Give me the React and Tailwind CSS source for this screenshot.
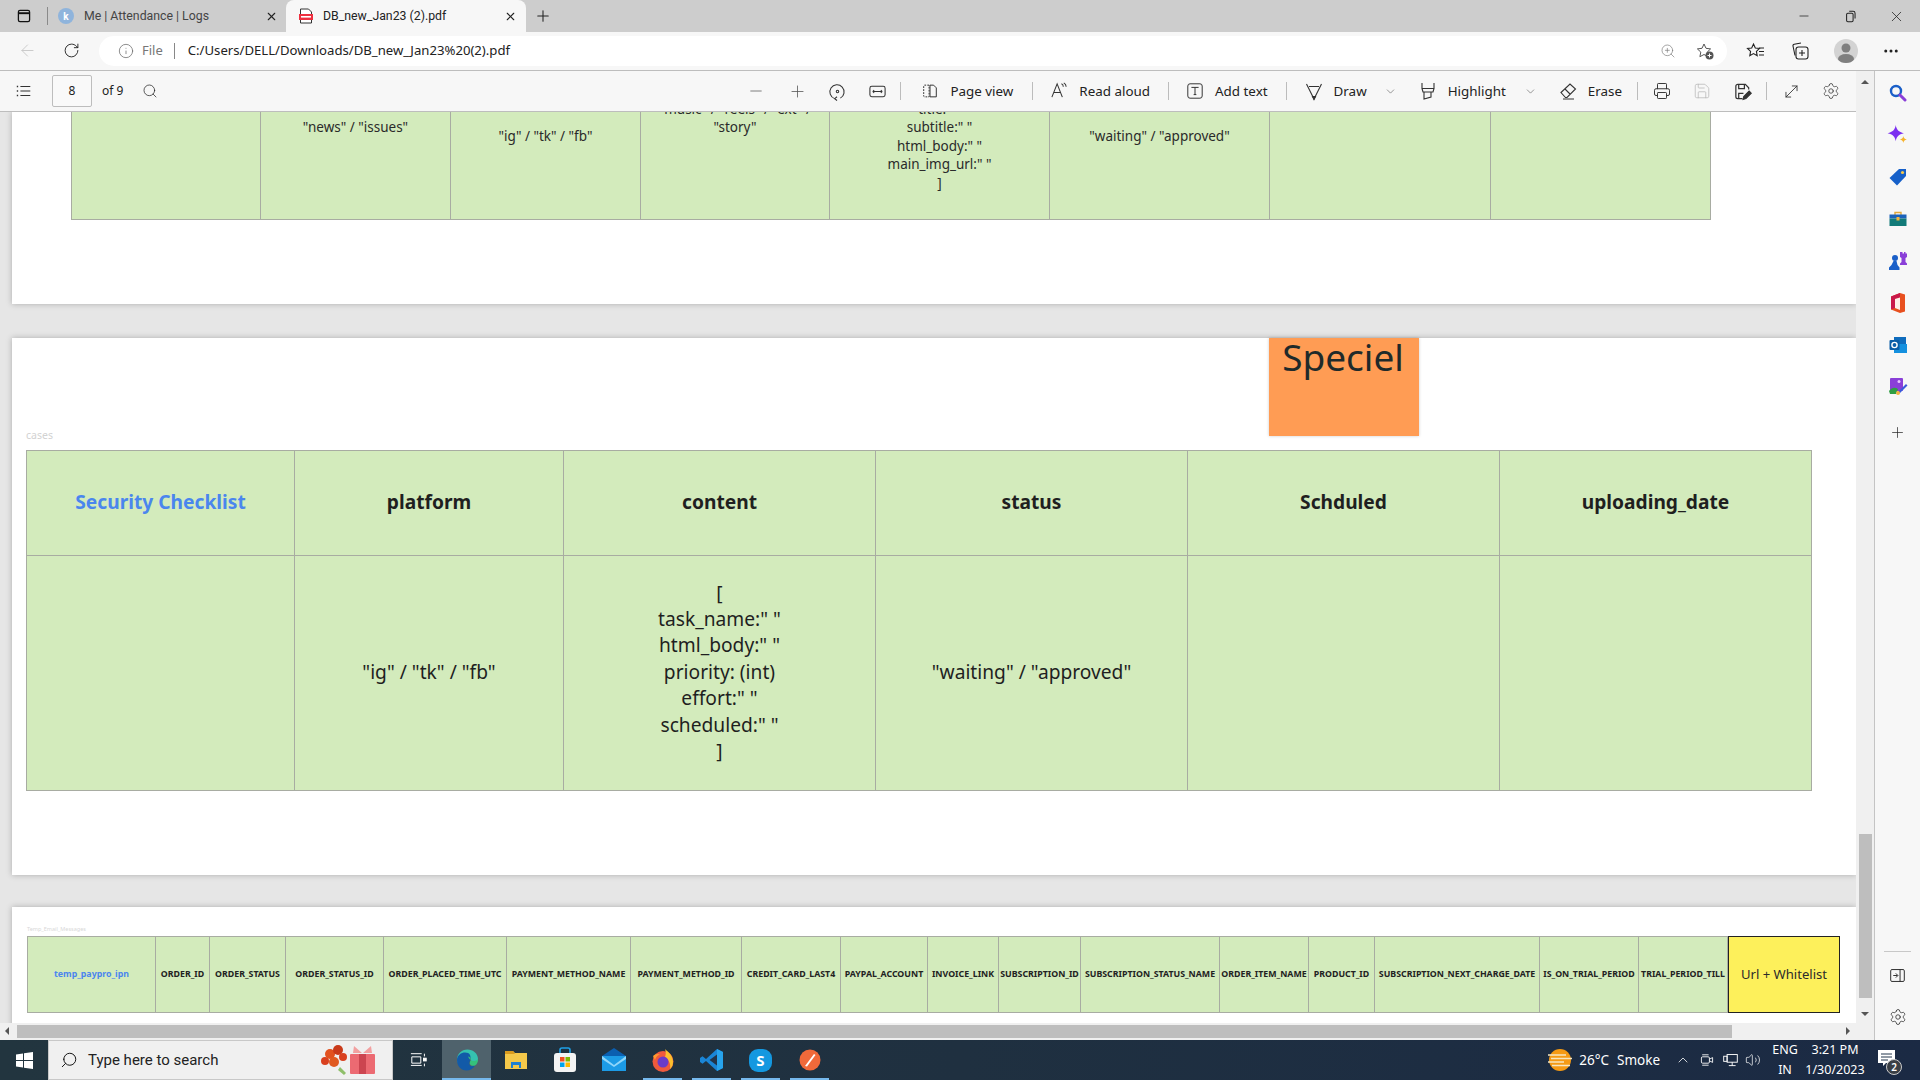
import {
  ArrowLeft, RotateCw, Info, ZoomIn, Minus, Plus, Search, ChevronDown, ChevronUp, X, Settings, Printer, Save,
  MoveDiagonal, Volume2, Ellipsis,
} from 'lucide-react'

function Svg({ size = 20, children, className = '' }) {
  return (
    <svg width={size} height={size} viewBox="0 0 20 20" fill="none" stroke="currentColor" strokeWidth="1.1" className={className}>
      {children}
    </svg>
  )
}

function TabStrip() {
  return (
    <div className="flex h-8 shrink-0 items-end bg-[#cdcdcd] text-[12.3px] text-[#333] [font-family:Roboto,sans-serif]">
      <div className="flex h-8 w-[47px] items-center justify-center">
        <Svg size={16} className="text-[#111]">
          <rect x="3" y="3" width="14" height="14" rx="2" strokeWidth="1.6" />
          <path d="M3 6.5h14" strokeWidth="2.4" />
        </Svg>
      </div>
      <div className="mb-[7px] h-[18px] w-px bg-[#8a8a8a]" />
      <div className="flex h-8 w-[238px] items-center pl-[10px]">
        <span className="flex h-4 w-4 items-center justify-center rounded-full bg-[#8fb4dc] text-[10px] font-bold text-white">k</span>
        <span className="ml-[10px] flex-1 text-[#444]">Me | Attendance | Logs</span>
        <X size={13} className="mr-[8px] text-[#222]" />
      </div>
      <div className="flex h-8 w-[240px] items-center rounded-t-lg bg-[#f7f7f7] pl-[11px]">
        <svg width="16" height="16" viewBox="0 0 16 16" className="ml-px">
          <path d="M2.5 1h8l3 3v11h-11z" fill="#fff" stroke="#333" strokeWidth="1" />
          <rect x="1" y="6" width="14" height="6" fill="#ee2f3f" />
          <rect x="3" y="8" width="10" height="1.6" fill="#fff" />
        </svg>
        <span className="ml-[9px] flex-1 text-[#222]">DB_new_Jan23 (2).pdf</span>
        <X size={13} className="mr-[9px] text-[#222]" />
      </div>
      <div className="flex h-8 w-[34px] items-center justify-center">
        <Plus size={18} strokeWidth={1.4} className="text-[#222]" />
      </div>
      <div className="flex-1" />
      <div className="flex h-8 items-center text-[#222]">
        <div className="flex w-[46px] justify-center"><Minus size={14} strokeWidth={1.3} /></div>
        <div className="flex w-[46px] justify-center">
          <Svg size={13} className="text-[#222]">
            <rect x="4" y="5" width="10" height="13" rx="2" strokeWidth="1.6" />
            <path d="M8 2h6a3 3 0 0 1 3 3v8" strokeWidth="1.6" />
          </Svg>
        </div>
        <div className="mr-px flex w-[46px] justify-center"><X size={17} strokeWidth={1.1} /></div>
      </div>
    </div>
  )
}

function AddressBar() {
  return (
    <div className="flex h-[39px] shrink-0 items-center border-b border-[#bdbdbd] bg-[#f7f7f7] pb-px">
      <ArrowLeft size={19} strokeWidth={1.1} className="ml-[18px] text-[#c4c4c4]" />
      <RotateCw size={17} strokeWidth={1.3} className="ml-[26px] text-[#222]" />
      <div className="ml-[19px] flex h-[30px] w-[1628px] items-center rounded-full bg-white text-[13.15px]">
        <Info size={16} strokeWidth={1.1} className="ml-[19px] text-[#666]" />
        <span className="ml-[8px] text-[13px] text-[#777]">File</span>
        <div className="ml-[11px] h-[16px] w-px bg-[#888]" />
        <span className="ml-[13px] text-[#222]">C:/Users/DELL/Downloads/DB_new_Jan23%20(2).pdf</span>
        <div className="flex-1" />
        <ZoomIn size={16} strokeWidth={1} className="mr-[20px] text-[#777]" />
        <svg width="18" height="18" viewBox="0 0 18 18" className="mr-[13px]">
          <path d="M8 2l2 4.3 4.6.6-3.4 3.2.9 4.6L8 12.5 3.9 14.7l.9-4.6L1.4 6.9 6 6.3z" fill="none" stroke="#555" strokeWidth="1" />
          <circle cx="13.5" cy="13.5" r="4" fill="#555" />
          <path d="M13.5 11.5v4M11.5 13.5h4" stroke="#fff" strokeWidth="1" />
        </svg>
      </div>
      <svg width="20" height="20" viewBox="0 0 20 20" className="ml-[19px]" fill="none" stroke="#222" strokeWidth="1.1">
        <path d="M7.5 3l1.8 4 4.2.5-3.1 2.9.8 4.3-3.7-2.1-3.7 2.1.8-4.3L1.5 7.5 5.7 7z" />
        <path d="M13 7h5M13 10.5h5M13 14h5" />
      </svg>
      <svg width="20" height="20" viewBox="0 0 20 20" className="ml-[24px]" fill="none" stroke="#222" strokeWidth="1.1">
        <path d="M5 14.5 3 5a1.5 1.5 0 0 1 1.2-1.8L11 2" />
        <rect x="6" y="6" width="12" height="12" rx="2.5" />
        <path d="M12 9v6M9 12h6" />
      </svg>
      <div className="ml-[24px] flex h-6 w-6 items-center justify-center overflow-hidden rounded-full bg-[#d3d3d3]">
        <svg width="24" height="24" viewBox="0 0 24 24" fill="#7f7f7f">
          <circle cx="12" cy="9" r="4.5" />
          <ellipse cx="12" cy="20" rx="8" ry="5" />
        </svg>
      </div>
      <Ellipsis size={18} className="ml-[24px] text-[#222]" />
    </div>
  )
}

function ToolSep({ className = '' }) {
  return <div className={`h-[18px] w-px shrink-0 bg-[#bcbcbc] ${className}`} />
}

function ToolIcon({ children, className = '' }) {
  return <div className={`flex h-10 w-10 shrink-0 items-center justify-center text-[#333] ${className}`}>{children}</div>
}

function ToolLabel({ icon, label, className = '' }) {
  return (
    <div className={`flex shrink-0 items-center whitespace-nowrap text-[13.4px] text-[#222] ${className}`}>
      <div className="flex w-8 justify-center text-[#333]">{icon}</div>
      <span className="ml-1">{label}</span>
    </div>
  )
}

function PdfToolbar() {
  return (
    <div className="flex h-[41px] shrink-0 items-center border-b border-[#bdbdbd] bg-[#f7f7f7] text-[#222]">
      <ToolIcon className="ml-1">
        <Svg size={18}>
          <path d="M6 5h11M6 10h11M6 15h11" strokeWidth="1.2" />
          <path d="M2 5h1.5M2 10h1.5M2 15h1.5" strokeWidth="1.6" />
        </Svg>
      </ToolIcon>
      <div className="ml-2 flex h-8 w-10 shrink-0 items-center justify-center rounded-[2px] border border-[#bdbdbd] bg-[#f9f9f9] text-[12px]">8</div>
      <span className="ml-[10px] whitespace-nowrap text-[12px]">of 9</span>
      <Search size={16} strokeWidth={1.1} className="ml-[19px] shrink-0" />

      <ToolIcon className="ml-[578px]"><Minus size={18} strokeWidth={1} className="text-[#555]" /></ToolIcon>
      <ToolIcon className="ml-px"><Plus size={19} strokeWidth={1} className="text-[#555]" /></ToolIcon>
      <ToolIcon>
        <Svg size={19}>
          <path d="M7 17.5A7.5 7.5 0 1 1 13 17" />
          <path d="M9.5 15.5 7 17.5l2.5 2" />
          <circle cx="10" cy="10" r="1.3" />
        </Svg>
      </ToolIcon>
      <ToolIcon>
        <Svg size={19}>
          <rect x="2" y="4.5" width="16" height="11" rx="2" />
          <path d="M5 10h10M5 10l1.5-1.5M5 10l1.5 1.5M15 10l-1.5-1.5M15 10l-1.5 1.5" />
        </Svg>
      </ToolIcon>
      <ToolSep className="ml-[3px]" />
      <ToolLabel
        className="ml-[13px]"
        label="Page view"
        icon={
          <Svg size={18}>
            <path d="M9 3.5H4a1 1 0 0 0-1 1v11a1 1 0 0 0 1 1h5z" strokeDasharray="2 1.3" />
            <path d="M10 3.5h4l3 3v10h-7z" />
          </Svg>
        }
      />
      <ToolSep className="ml-[19px]" />
      <ToolLabel
        className="ml-[10px]"
        label="Read aloud"
        icon={
          <Svg size={19}>
            <path d="M2 17 7.5 3 13 17M4 12h7" />
            <path d="M12 3c1.5.5 2 1.5 2 3M14.5 2c1.8 1 2.5 2 2.5 4" />
          </Svg>
        }
      />
      <ToolSep className="ml-[18px]" />
      <ToolLabel
        className="ml-[10px]"
        label="Add text"
        icon={
          <Svg size={18}>
            <rect x="2" y="2" width="16" height="16" rx="2.5" />
            <path d="M6 6h8M10 6v8M8.5 14h3" />
          </Svg>
        }
      />
      <ToolSep className="ml-[18px]" />
      <ToolLabel
        className="ml-[11px]"
        label="Draw"
        icon={
          <Svg size={20}>
            <path d="M2.5 3 10 18 17.5 3M5 5.5h10" />
            <path d="M8.5 15.5 10 18.5l1.5-3z" fill="currentColor" />
          </Svg>
        }
      />
      <ChevronDown size={13} strokeWidth={1} className="ml-[17px] shrink-0 text-[#444]" />
      <ToolLabel
        className="ml-[15px]"
        label="Highlight"
        icon={
          <Svg size={20}>
            <path d="M4 2v5.5h12V2M4 7.5l1 3.5h10l1-3.5M6 11v7l7-2v-5" />
          </Svg>
        }
      />
      <ChevronDown size={13} strokeWidth={1} className="ml-[18px] shrink-0 text-[#444]" />
      <ToolLabel
        className="ml-[15px]"
        label="Erase"
        icon={
          <Svg size={20}>
            <path d="M3 11.5 12 3l5.5 5-8.5 8.5H7.5zM7 8l5.5 5.5M5 18h11" />
          </Svg>
        }
      />
      <ToolSep className="ml-[15px]" />
      <ToolIcon className="ml-1"><Printer size={18} strokeWidth={1.3} /></ToolIcon>
      <ToolIcon><Save size={18} strokeWidth={1} className="text-[#b5b5b5]" /></ToolIcon>
      <ToolIcon>
        <Svg size={19}>
          <path d="M10 17.5H5a2 2 0 0 1-2-2v-11a2 2 0 0 1 2-2h8l3.5 3.5V8" strokeWidth="1.3" />
          <path d="M6 3v4h6V3M6 17v-5h5" strokeWidth="1.3" />
          <path d="m10.5 18.5.8-3.3 5.7-5.7 2.3 2.3-5.7 5.7z" fill="currentColor" />
        </Svg>
      </ToolIcon>
      <ToolSep className="ml-1" />
      <ToolIcon className="ml-1"><MoveDiagonal size={19} strokeWidth={1.1} /></ToolIcon>
      <ToolIcon><Settings size={18} strokeWidth={1} /></ToolIcon>
    </div>
  )
}

function Cell({ children, className = '' }) {
  return (
    <div className={`flex items-center justify-center whitespace-pre-line border-r border-b border-[#a8aca2] bg-[#d3ebbc] text-center ${className}`}>
      {children}
    </div>
  )
}

function TopTable() {
  return (
    <div className="ml-[59px] -mt-[59px] grid h-[167px] w-fit grid-cols-[189px_190px_190px_189px_220px_220px_221px_220px] border-t border-l border-[#a8aca2] text-[13.5px] leading-[18.5px] text-[#2a2a2a]">
      <Cell />
      <Cell><span className="pb-[18px]">"news" / "issues"</span></Cell>
      <Cell>"ig" / "tk" / "fb"</Cell>
      <Cell><span className="pb-[37px]">{'"music" / "reels" / "ext" /\n"story"'}</span></Cell>
      <Cell>{'[\ntitle:" "\nsubtitle:" "\nhtml_body:" "\nmain_img_url:" "\n]'}</Cell>
      <Cell>"waiting" / "approved"</Cell>
      <Cell />
      <Cell />
    </div>
  )
}

function ChecklistTable() {
  const heads = ['platform', 'content', 'status', 'Schduled', 'uploading_date']
  return (
    <div className="ml-[14px] mt-2 grid w-fit grid-cols-[268px_269px_312px_312px_312px_312px] grid-rows-[105px_235px] border-t border-l border-[#a8aca2] text-[19.2px] leading-[26.4px] text-[#1f1f1f]">
      <Cell className="pb-[2px] font-bold text-[#4a86ee]">Security Checklist</Cell>
      {heads.map((h) => (
        <Cell key={h} className="pb-[2px] font-bold">{h}</Cell>
      ))}
      <Cell />
      <Cell className="pb-[2px]">"ig" / "tk" / "fb"</Cell>
      <Cell className="pb-[2px]">{'[\ntask_name:" "\nhtml_body:" "\npriority: (int)\neffort:" "\nscheduled:" "\n]'}</Cell>
      <Cell className="pb-[2px]">"waiting" / "approved"</Cell>
      <Cell />
      <Cell />
    </div>
  )
}

function IpnTable() {
  const cols = [
    'ORDER_ID', 'ORDER_STATUS', 'ORDER_STATUS_ID', 'ORDER_PLACED_TIME_UTC', 'PAYMENT_METHOD_NAME', 'PAYMENT_METHOD_ID',
    'CREDIT_CARD_LAST4', 'PAYPAL_ACCOUNT', 'INVOICE_LINK', 'SUBSCRIPTION_ID', 'SUBSCRIPTION_STATUS_NAME', 'ORDER_ITEM_NAME',
    'PRODUCT_ID', 'SUBSCRIPTION_NEXT_CHARGE_DATE', 'IS_ON_TRIAL_PERIOD', 'TRIAL_PERIOD_TILL',
  ]
  return (
    <div className="ml-[15px] mt-[3px] grid h-[77px] w-fit grid-cols-[128px_54px_76px_98px_123px_124px_111px_99px_87px_71px_82px_139px_89px_66px_165px_99px_89px_112px] border-t border-l border-[#a8aca2] text-[8.8px] font-bold text-[#222]">
      <Cell className="text-[#4a86ee]">temp_paypro_ipn</Cell>
      {cols.map((c) => (
        <Cell key={c}>{c}</Cell>
      ))}
      <div className="-mt-px flex items-center justify-center border border-[#222] bg-[#fdf05b] text-[13.1px] font-normal text-[#2b2b2b]">Url + Whitelist</div>
    </div>
  )
}

function Viewer() {
  return (
    <div className="relative flex-1 overflow-hidden bg-[#e6e6e6]">
      <div className="ml-3 h-[192px] overflow-hidden bg-white shadow-[0_0_6px_rgba(0,0,0,0.25)]">
        <TopTable />
      </div>
      <div className="relative ml-3 mt-[34px] h-[537px] bg-white pt-[90px] shadow-[0_0_6px_rgba(0,0,0,0.25)]">
        <div className="absolute left-[1257px] top-0 flex h-[98px] w-[150px] justify-center bg-[#ff9c54] pr-[2px] text-[37px] leading-[38px] text-[#1f2a2a] shadow-[0_0_3px_rgba(0,0,0,0.2)]">Speciel</div>
        <div className="ml-[14px] text-[10.5px] leading-[14px] text-[#d2d2d2]">cases</div>
        <ChecklistTable />
      </div>
      <div className="ml-3 mt-8 h-[200px] bg-white pt-[19px] shadow-[0_0_6px_rgba(0,0,0,0.25)]">
        <div className="ml-[15px] text-[5.5px] leading-[7px] text-[#d8d8d8]">Temp_Email_Messages</div>
        <IpnTable />
      </div>
    </div>
  )
}

function HScrollbar() {
  return (
    <div className="flex h-[17px] shrink-0 items-center bg-[#f0f0f0] pb-px">
      <div className="ml-[5px] h-0 w-0 border-y-4 border-r-4 border-y-transparent border-r-[#555]" />
      <div className="ml-2 h-[13px] w-[1715px] bg-[#bebebe]" />
      <div className="ml-[114px] h-0 w-0 border-y-4 border-l-4 border-y-transparent border-l-[#555]" />
    </div>
  )
}

function VScrollbar() {
  return (
    <div className="flex w-[18px] shrink-0 flex-col items-center bg-[#f0f0f0] pt-[9px]">
      <div className="h-0 w-0 border-x-4 border-b-4 border-x-transparent border-b-[#555]" />
      <div className="mt-[750px] h-[164px] w-[13px] bg-[#bebebe]" />
      <div className="mt-[14px] h-0 w-0 border-x-4 border-t-4 border-x-transparent border-t-[#555]" />
    </div>
  )
}

function SideIcon({ children, className = '' }) {
  return <div className={`flex h-[42px] w-full items-center justify-center ${className}`}>{children}</div>
}

function Sidebar() {
  return (
    <div className="flex flex-1 flex-col border-l border-[#c4c4c4] bg-[#f7f7f7] pt-px">
      <SideIcon>
        <svg width="18" height="18" viewBox="0 0 18 18" fill="none">
          <circle cx="7" cy="7" r="5" stroke="#1a5fc8" strokeWidth="2.4" />
          <path d="m11 11 5 5" stroke="#8a3fd8" strokeWidth="3" strokeLinecap="round" />
        </svg>
      </SideIcon>
      <SideIcon>
        <svg width="21" height="21" viewBox="0 0 18 18">
          <path d="M7.5 0c.6 4 2.5 6 7 7-4.5 1-6.4 3-7 7-.6-4-2.5-6-7-7 4.5-1 6.400-3 7-7z" fill="#7b2ff0" />
          <path d="M14 9.5c.2 1.7 1 2.500 3 3-2 .4-2.800 1.300-3 3-.2-1.700-1-2.600-3-3 2-.5 2.800-1.300 3-3z" fill="#f7b32b" />
        </svg>
      </SideIcon>
      <SideIcon>
        <svg width="18" height="18" viewBox="0 0 18 18">
          <path d="M10 1h7v7l-9 9.5L.5 10z" fill="#1660c9" />
          <circle cx="13.5" cy="4.5" r="1.6" fill="#f7c948" />
        </svg>
      </SideIcon>
      <SideIcon>
        <svg width="18" height="18" viewBox="0 0 18 18" fill="none">
          <path d="M6 5V2.5h6V5" stroke="#e2a83a" strokeWidth="1.4" />
          <rect x="0.5" y="4.5" width="17" height="4" fill="#1c62b9" />
          <rect x="0.5" y="8.5" width="17" height="7.5" fill="#127a78" />
          <rect x="7.5" y="7" width="3" height="3.5" fill="#f2b33d" />
        </svg>
      </SideIcon>
      <SideIcon>
        <svg width="20" height="20" viewBox="0 0 20 20">
          <path d="M13 1h1.5v1.5H16V1h1.5v1.5H19V1v5l-1.500 1v4l1.500 1.500V14h-7v-1.500L13.500 11V7L12 6V1z" fill="#8a3fd8" />
          <circle cx="7" cy="7" r="3" fill="#1a5fc8" />
          <path d="M5.5 10h3l1 4 2 2.500V19H1v-2.500L3.500 14z" fill="#1a5fc8" />
        </svg>
      </SideIcon>
      <SideIcon>
        <svg width="18" height="20" viewBox="0 0 18 20">
          <path d="M11 0 2 3.5v13L11 20l5-1.500V1.500z" fill="#e8501f" />
          <path d="M2 3.5v13l4-1.500V6l5-1.500V0z" fill="#c9184a" />
          <path d="M6 6v9l5 2V4.500z" fill="#fff" opacity="0.9" />
        </svg>
      </SideIcon>
      <SideIcon>
        <svg width="18" height="18" viewBox="0 0 18 18">
          <rect x="5" y="1" width="12" height="8" fill="#0f6cbd" />
          <path d="M5 8h13v9H5z" fill="#1490df" />
          <rect x="0.5" y="4" width="10" height="10" rx="1" fill="#0a5ea8" />
          <circle cx="5.5" cy="9" r="2.6" fill="none" stroke="#fff" strokeWidth="1.4" />
        </svg>
      </SideIcon>
      <SideIcon>
        <svg width="20" height="20" viewBox="0 0 20 20">
          <rect x="2" y="1" width="13" height="13" rx="1" fill="#8a3fd8" />
          <circle cx="11" cy="4.5" r="1.5" fill="#e7c6ff" />
          <path d="M1 14c3-4 6-4 9-2l-2 5H2z" fill="#2f9e44" />
          <path d="m10 15 8-8 1.5 1.5-8 8z" fill="#3b5bdb" />
          <circle cx="10" cy="16" r="2" fill="#f2b33d" />
        </svg>
      </SideIcon>
      <SideIcon className="mt-[3px]"><Plus size={17} strokeWidth={1} className="text-[#222]" /></SideIcon>
      <div className="flex-1" />
      <div className="mx-[9px] mb-[2px] h-px bg-[#c8c8c8]" />
      <SideIcon>
        <Svg size={17} className="text-[#222]">
          <rect x="2" y="3" width="16" height="14" rx="1.5" />
          <path d="M13 3v14M5 10h5M8 7.5 10.5 10 8 12.5" />
        </Svg>
      </SideIcon>
      <SideIcon className="mb-[2px]"><Settings size={18} strokeWidth={1} className="text-[#222]" /></SideIcon>
    </div>
  )
}

function TaskTile({ children, active, open }) {
  return (
    <div className={`relative flex h-10 w-[49px] items-center justify-center ${active ? 'bg-[#4f626c]' : ''}`}>
      {children}
      {active && <div className="absolute inset-x-0 bottom-0 h-[2px] bg-[#76b9ed]" />}
      {open && <div className="absolute inset-x-[5px] bottom-0 h-[2px] bg-[#76b9ed]" />}
    </div>
  )
}

function Taskbar() {
  return (
    <div className="flex h-10 shrink-0 items-center bg-gradient-to-r from-[#22353f] via-[#1f3040] to-[#1b2a44] text-white">
      <div className="flex h-10 w-12 items-center justify-center">
        <svg width="17" height="17" viewBox="0 0 17 17" fill="#fff">
          <path d="M0 2.4 7 1.4V8H0zM8 1.300 17 0v8H8zM0 9h7v6.600l-7-1zM8 9h9v8l-9-1.300z" />
        </svg>
      </div>
      <div className="flex h-10 w-[345px] items-center border border-[#c8c8c8] bg-[#f0f0f0] text-[15px] text-[#222] [font-family:Roboto,sans-serif]">
        <Search size={18} strokeWidth={1.3} className="ml-[11px] -scale-x-100 text-[#111]" />
        <span className="ml-[10px] flex-1">Type here to search</span>
        <svg width="62" height="34" viewBox="0 0 60 34" className="mr-[13px]">
          <path d="M20 27l6 5 2-2-6-6z" fill="#8fbf6a" />
          <circle cx="7" cy="18" r="4" fill="#d9401f" />
          <circle cx="12" cy="11" r="5" fill="#e2521f" />
          <circle cx="20" cy="7" r="5" fill="#c93a1a" />
          <circle cx="16" cy="19" r="5" fill="#e05a20" />
          <circle cx="25" cy="14" r="4" fill="#d9401f" />
          <rect x="32" y="11" width="25" height="20" rx="1" fill="#ec6a72" />
          <rect x="41" y="11" width="7" height="20" fill="#cc4550" />
          <path d="M44 10 36 3l-1 7zM45 10l8-7 1 7z" fill="#f2a0a0" />
        </svg>
      </div>
      <TaskTile>
        <Svg size={18} className="-mr-[2px] text-white">
          <path d="M1 3h12M1 16h12M2 6.5h10v7H2zM16 3v3M16 14v3" />
          <rect x="15" y="8" width="3" height="3" fill="currentColor" />
        </Svg>
      </TaskTile>
      <TaskTile active>
        <svg width="24" height="24" viewBox="0 0 24 24">
          <path d="M2 12C2 6 6.5 1.5 12.5 1.5 18 1.5 23 5.5 23 11c0 3-2.5 4.5-5 4.5-2 0-3-.8-3-1.500 2-1.500 1-5.500-3-5.500-5 0-7 5-6 9C4 16 2 14.500 2 12z" fill="#35c1b0" />
          <path d="M2 12c0-5 4.5-7.500 8-7.500 5 0 6.500 3.500 5 8-2 5 1 7 5 5-2 3.500-5 5-8.500 5C6 22.500 2 18 2 12z" fill="#125aa8" />
          <path d="M13 8.5c3 .3 3.500 3.500 2 5.500-1 2 1 4.500 5 3.500 2-1 3-3.500 3-6.500-2 3-8 3-10-2.500z" fill="#35c17a" />
        </svg>
      </TaskTile>
      <TaskTile>
        <svg width="24" height="22" viewBox="0 0 24 22">
          <path d="M1 2h8l2 2h12v16H1z" fill="#f4c84a" />
          <path d="M1 2h8l2 3H1z" fill="#d99a1e" />
          <path d="M7 19v-6h10v6h-2v-3H9v3z" fill="#1f7fd1" />
        </svg>
      </TaskTile>
      <TaskTile>
        <svg width="24" height="26" viewBox="0 0 24 26">
          <path d="M7 6V3a2 2 0 0 1 2-2h6a2 2 0 0 1 2 2v3" fill="none" stroke="#1ea0e6" strokeWidth="1.6" />
          <rect x="1" y="6" width="22" height="19" rx="3" fill="#f3f3f3" />
          <rect x="7" y="10" width="4.5" height="4.5" fill="#f25022" />
          <rect x="12.5" y="10" width="4.5" height="4.5" fill="#7fba00" />
          <rect x="7" y="15.5" width="4.5" height="4.5" fill="#00a4ef" />
          <rect x="12.5" y="15.5" width="4.5" height="4.5" fill="#ffb900" />
        </svg>
      </TaskTile>
      <TaskTile>
        <svg width="24" height="24" viewBox="0 0 24 24">
          <path d="M12 0 24 8H0z" fill="#0b5fb0" />
          <rect y="8" width="24" height="15" fill="#1c9be6" />
          <path d="M0 8l12 9 12-9v3L12 19 0 11z" fill="#8fd6fa" />
        </svg>
      </TaskTile>
      <TaskTile open>
        <svg width="24" height="24" viewBox="0 0 24 24">
          <circle cx="12" cy="13.5" r="10.5" fill="#ef5a3c" />
          <path d="M14 1c3 3 8 6 8 13 0 3-1 5-3 7 1-5-1-9-5-12 1-3 1-5 0-8z" fill="#fbbf2d" />
          <circle cx="12" cy="14" r="5.5" fill="#6a3bc8" />
          <path d="M2 8c2-2 5-3 7-1-3 0-4 2-5 5z" fill="#ff9a2e" />
        </svg>
      </TaskTile>
      <TaskTile open>
        <svg width="24" height="24" viewBox="0 0 24 24">
          <path d="M17 1 23 4v16l-6 3L6 13l-3.5 2.700L0 14V10l2.500-1.700L6 11z" fill="#1a85d6" />
          <path d="M17 6.5v11L9.500 12z" fill="#22344a" />
          <path d="M17 1 23 4v16l-6 3z" fill="#27a3ec" />
        </svg>
      </TaskTile>
      <TaskTile open>
        <div className="flex h-[23px] w-[23px] items-center justify-center rounded-[9px] bg-[#1498e0] text-[15px] font-bold leading-none">S</div>
      </TaskTile>
      <TaskTile open>
        <svg width="24" height="24" viewBox="0 0 24 24">
          <circle cx="12" cy="12" r="10.5" fill="#f0693a" />
          <path d="M7 18 16 6l1.5 1L9 18.500z" fill="#fff" />
        </svg>
      </TaskTile>
      <div className="flex-1" />
      <svg width="24" height="24" viewBox="0 0 24 24" className="mr-[7px]">
        <circle cx="12" cy="12" r="11" fill="#f59a14" />
        <path d="M0 7h18M3 10.5h21M0 14h16M4 17.5h18" stroke="#f6e6c0" strokeWidth="1.5" />
      </svg>
      <span className="text-[13.5px]">26°C</span>
      <span className="ml-2 text-[13.5px]">Smoke</span>
      <ChevronUp size={16} strokeWidth={1.2} className="ml-[15px]" />
      <Svg size={16} className="ml-2">
        <rect x="3" y="6" width="10" height="8" rx="1.5" />
        <path d="m13 9 4-2v6l-4-2M4 3.5h8M4 16.5h8" />
      </Svg>
      <Svg size={17} className="ml-[7px]">
        <rect x="6" y="3" width="12" height="9" />
        <rect x="2" y="5" width="4" height="6" />
        <path d="M12 12v4M8 16h8" />
      </Svg>
      <Volume2 size={16} strokeWidth={1.1} className="ml-[6px]" />
      <div className="ml-[9px] w-[30px] text-center text-[12.5px] leading-5">
        <div>ENG</div>
        <div>IN</div>
      </div>
      <div className="ml-1 w-[62px] text-center text-[12.5px] leading-5">
        <div>3:21 PM</div>
        <div>1/30/2023</div>
      </div>
      <div className="relative ml-3 mr-[18px] flex h-10 w-6 items-center">
        <svg width="17" height="17" viewBox="0 0 17 17" fill="#fff" className="mb-[3px]">
          <path d="M0 0h17v13H8l-3 3v-3H0z" />
          <path d="M3 4h11M3 7h11M3 10h7" stroke="#22344a" />
        </svg>
        <span className="absolute left-2 top-[19px] flex h-4 w-4 items-center justify-center rounded-full border border-[#ccc] bg-[#3a3f45] text-[10px] font-semibold">2</span>
      </div>
    </div>
  )
}

export default function App() {
  return (
    <div className="flex h-screen w-screen flex-col overflow-hidden [font-family:'Noto_Sans',sans-serif]">
      <TabStrip />
      <AddressBar />
      <div className="flex min-h-0 flex-1">
        <div className="flex w-[1856px] shrink-0 flex-col">
          <PdfToolbar />
          <Viewer />
          <HScrollbar />
        </div>
        <VScrollbar />
        <Sidebar />
      </div>
      <Taskbar />
    </div>
  )
}
